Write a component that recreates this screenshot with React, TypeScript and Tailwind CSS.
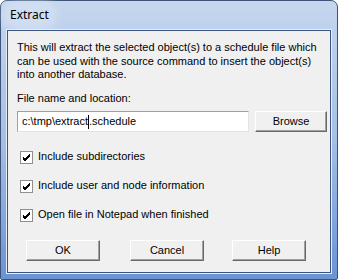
import React from "react";

const body = { fontFamily: '"Liberation Sans", Tahoma, sans-serif' };

function Check({ label }: { label: string }) {
  return (
    <label className="flex items-center gap-[5px] h-[16px]">
      <span className="w-[13px] h-[13px] border border-[#8f8f8f] bg-white flex items-center justify-center">
        <svg width="9" height="9" viewBox="0 0 9 9">
          <path d="M1 4 L3 6 L8 1 M1 5 L3 7 L8 2 M1 6 L3 8 L8 3" stroke="#000" strokeWidth="1" fill="none" />
        </svg>
      </span>
      <span>{label}</span>
    </label>
  );
}

function Btn({ children, w = "w-[74px]" }: { children: React.ReactNode; w?: string }) {
  return (
    <button
      className={`${w} shrink-0 h-[21px] bg-[#f0f0f0] border border-t-white border-l-white border-r-[#696969] border-b-[#696969] shadow-[inset_-1px_-1px_0_#a0a0a0] text-[11px] text-black`}
    >
      {children}
    </button>
  );
}

export default function App() {
  return (
    <div className="w-[338px] h-[280px] bg-white">
      <div className="w-[338px] h-[280px] rounded-t-[7px] rounded-b-[2px] border border-[#3d5478] bg-gradient-to-b from-[#c5d6ee] via-[#a5bfe6] to-[#6a93d4] flex flex-col">
        <div className="h-[28px] flex items-center pl-[7px]">
          <span
            className="text-[12px] text-black px-[2px] rounded-full bg-[#d8e4f4]/60 shadow-[0_0_8px_6px_rgba(220,230,245,0.6)]"
            style={{ fontFamily: '"Noto Sans", "Open Sans", sans-serif' }}
          >
            Extract
          </span>
        </div>
        <div className="mx-[5px] mb-[5px] flex-1 border border-[#e8eef8]">
          <div
            className="h-full border border-[#3b5580] bg-[#f0f0f0] text-[11px] text-black pl-[9px] pr-[2px] pt-[10px] leading-[13.5px]"
            style={body}
          >
            <p>
              This will extract the selected object(s) to a schedule file which
              can be used with the source command to insert the object(s) into
              another database.
            </p>
            <p className="mt-[10px]">File name and location:</p>
            <div className="flex items-center mt-[6px]">
              <div className="w-[232px] shrink-0 h-[21px] bg-white border border-t-[#a0a0a0] border-l-[#a0a0a0] border-r-[#e3e3e3] border-b-[#e3e3e3] flex items-center pl-[4px]">
                <span>c:\tmp\extract</span>
                <span className="w-[1px] h-[14px] bg-black" />
                <span>.schedule</span>
              </div>
              <div className="ml-[6px]">
                <Btn w="w-[72px]">Browse</Btn>
              </div>
            </div>
            <div className="flex flex-col gap-[13px] mt-[17px] pl-[3px]">
              <Check label="Include subdirectories" />
              <Check label="Include user and node information" />
              <Check label="Open file in Notepad when finished" />
            </div>
            <div className="flex mt-[17px] pl-[9px]">
              <Btn>OK</Btn>
              <div className="ml-[30px]">
                <Btn>Cancel</Btn>
              </div>
              <div className="ml-[28px]">
                <Btn>Help</Btn>
              </div>
            </div>
          </div>
        </div>
      </div>
    </div>
  );
}
